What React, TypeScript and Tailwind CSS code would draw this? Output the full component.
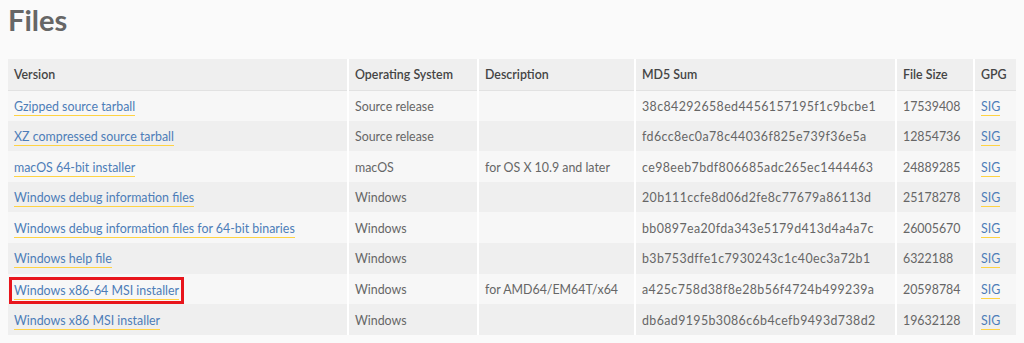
const rows = [
  { name: 'Gzipped source tarball', os: 'Source release', desc: '', md5: '38c84292658ed4456157195f1c9bcbe1', size: '17539408' },
  { name: 'XZ compressed source tarball', os: 'Source release', desc: '', md5: 'fd6cc8ec0a78c44036f825e739f36e5a', size: '12854736' },
  { name: 'macOS 64-bit installer', os: 'macOS', desc: 'for OS X 10.9 and later', md5: 'ce98eeb7bdf806685adc265ec1444463', size: '24889285' },
  { name: 'Windows debug information files', os: 'Windows', desc: '', md5: '20b111ccfe8d06d2fe8c77679a86113d', size: '25178278' },
  { name: 'Windows debug information files for 64-bit binaries', os: 'Windows', desc: '', md5: 'bb0897ea20fda343e5179d413d4a4a7c', size: '26005670' },
  { name: 'Windows help file', os: 'Windows', desc: '', md5: 'b3b753dffe1c7930243c1c40ec3a72b1', size: '6322188' },
  { name: 'Windows x86-64 MSI installer', os: 'Windows', desc: 'for AMD64/EM64T/x64', md5: 'a425c758d38f8e28b56f4724b499239a', size: '20598784', marked: true },
  { name: 'Windows x86 MSI installer', os: 'Windows', desc: '', md5: 'db6ad9195b3086c6b4cefb9493d738d2', size: '19632128' },
];

function FileLink({ children }: { children: React.ReactNode }) {
  return (
    <a href="#" className="border-b border-[#ffd343] pb-[1px] text-[#4d7db8] leading-[16px]">
      {children}
    </a>
  );
}

export default function App() {
  return (
    <div
      className="h-[343px] w-[1024px] overflow-hidden bg-[#fafafa] px-2 text-[12.4px] text-[#666]"
      style={{ fontFamily: '"Source Sans Pro", Lato, "Liberation Sans", sans-serif' }}
    >
      <h1 className="pt-[3px] text-[29px] font-bold leading-[34px] text-[#666]">Files</h1>

      {/* Table */}
      <table className="mt-[22px] w-[1008px] table-fixed border-collapse">
        <colgroup>
          <col className="w-[340px]" />
          <col className="w-[130px]" />
          <col className="w-[157px]" />
          <col className="w-[261px]" />
          <col className="w-[78px]" />
          <col className="w-[42px]" />
        </colgroup>
        <thead>
          <tr className="h-[31px] border-b border-[#e2e2e2] bg-[#efefef] text-left text-[#444]">
            <th className="px-[6px] pt-[3px] font-semibold">Version</th>
            <th className="border-l-2 border-white px-[6px] pt-[3px] font-semibold">Operating System</th>
            <th className="border-l-2 border-white px-[6px] pt-[3px] font-semibold">Description</th>
            <th className="border-l-2 border-white px-[6px] pt-[3px] font-semibold">MD5 Sum</th>
            <th className="border-l-2 border-white px-[6px] pt-[3px] font-semibold">File Size</th>
            <th className="border-l-2 border-white px-[6px] pt-[3px] font-semibold">GPG</th>
          </tr>
        </thead>
        <tbody>
          {rows.map((r, i) => (
            <tr key={r.md5} className={i % 2 === 0 ? 'h-[30.6px] bg-[#f7f7f7]' : 'h-[30.6px] bg-[#efefef]'}>
              <td className="px-[6px] pt-[3px]">
                {r.marked ? (
                  <span className="-mx-[5px] inline-block border-[3px] border-[#e8151c] px-[2px] pt-[3px] pb-[2px] leading-[16px]">
                    <FileLink>{r.name}</FileLink>
                  </span>
                ) : (
                  <FileLink>{r.name}</FileLink>
                )}
              </td>
              <td className="border-l-2 border-white px-[6px] pt-[3px]">{r.os}</td>
              <td className="border-l-2 border-white px-[6px] pt-[3px]">{r.desc}</td>
              <td className="border-l-2 border-white px-[6px] pt-[3px] tracking-[0.4px]">{r.md5}</td>
              <td className="border-l-2 border-white px-[6px] pt-[3px]">{r.size}</td>
              <td className="border-l-2 border-white px-[6px] pt-[3px]">
                <FileLink>SIG</FileLink>
              </td>
            </tr>
          ))}
        </tbody>
      </table>
    </div>
  );
}
